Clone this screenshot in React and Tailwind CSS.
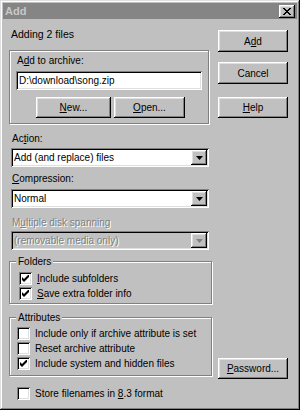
import React from 'react';

const raised = 'shadow-[inset_-1px_-1px_#000,inset_1px_1px_#fff,inset_-2px_-2px_#808080,inset_2px_2px_#dfdfdf]';
const sunken = 'shadow-[inset_1px_1px_#808080,inset_-1px_-1px_#fff,inset_2px_2px_#000,inset_-2px_-2px_#dfdfdf]';
const etched = 'border border-[#808080] shadow-[inset_1px_1px_#fff,1px_1px_#fff]';

const Btn = ({ children, className = '' }) => (
  <button className={`${raised} bg-[#c0c0c0] flex items-center justify-center text-[10px] leading-[13px] text-black ${className}`}>
    {children}
  </button>
);

const Select = ({ value, disabled, className = '' }) => (
  <div className={`${sunken} h-[19px] flex items-center pl-[3px] pr-[2px] ${disabled ? 'bg-[#c0c0c0]' : 'bg-white'} ${className}`}>
    <span className={`flex-1 whitespace-nowrap ${disabled ? 'text-[#808080] [text-shadow:1px_1px_#fff]' : ''}`}>{value}</span>
    <div className={`${raised} w-[16px] h-[15px] bg-[#c0c0c0] flex items-center justify-center`}>
      <svg width="7" height="4" viewBox="0 0 7 4">
        <polygon points="0,0 7,0 3.5,4" fill={disabled ? '#808080' : '#000'} />
      </svg>
    </div>
  </div>
);

const Check = ({ checked, children }) => (
  <div className="flex items-center h-[15px]">
    <div className={`${sunken} bg-white w-[13px] h-[13px] shrink-0 flex items-center justify-center`}>
      {checked && (
        <svg width="7" height="7" viewBox="0 0 7 7">
          <polygon points="0,2 2,4 7,-1 7,2 2,7 0,5" fill="#000" />
        </svg>
      )}
    </div>
    <span className="ml-[5px] whitespace-nowrap">{children}</span>
  </div>
);

const CloseGlyph = () => {
  // classic 8x7 pixel X
  const rows = ['##....##', '.##..##.', '..####..', '...##...', '..####..', '.##..##.', '##....##'];
  return (
    <svg width="8" height="7" viewBox="0 0 8 7" shapeRendering="crispEdges">
      {rows.map((r, y) =>
        r.split('').map((c, x) => (c === '#' ? <rect key={`${x}-${y}`} x={x} y={y} width="1" height="1" fill="#000" /> : null))
      )}
    </svg>
  );
};

export default function App() {
  return (
    <div className={`w-[300px] h-[410px] bg-[#c0c0c0] p-[3px] flex flex-col text-[10px] leading-[13px] text-black font-['Liberation_Sans',Arial,sans-serif] shadow-[inset_-1px_-1px_#000,inset_1px_1px_#dfdfdf,inset_-2px_-2px_#808080,inset_2px_2px_#fff]`}>
      {/* title bar */}
      <div className="h-[16px] bg-[#858585] flex items-center pl-[2px] pr-[2px]">
        <span className="font-bold text-[11px] text-[#c8c8c8] flex-1">Add</span>
        <button className={`${raised} bg-[#c0c0c0] w-[16px] h-[13px] flex items-center justify-center`}>
          <CloseGlyph />
        </button>
      </div>

      <div className="flex">
        {/* left column */}
        <div className="ml-[6px] w-[203px]">
          <div className="mt-[9px] ml-[2px] text-[10.5px]">Adding 2 files</div>

          <div className={`${etched} mt-[9px] w-[200px] pt-[3px] pb-[5px]`}>
            <div className="ml-[7px]">
              A<u>d</u>d to archive:
            </div>
            <div className={`${sunken} bg-white mt-[4px] ml-[6px] w-[186px] h-[19px] flex items-center pl-[3px]`}>
              D:\download\song.zip
            </div>
            <div className="flex mt-[7px] ml-[26px] gap-[3px]">
              <Btn className="w-[75px] h-[21px]">
                <u>N</u>ew...
              </Btn>
              <Btn className="w-[71px] h-[21px]">
                <u>O</u>pen...
              </Btn>
            </div>
          </div>

          <div className="ml-[2px]">
            <div className="mt-[8px] ml-[1px]">
              Ac<u>t</u>ion:
            </div>
            <Select className="mt-[3px] w-[198px]" value="Add (and replace) files" />
            <div className="mt-[5px] ml-[1px]">
              <u>C</u>ompression:
            </div>
            <Select className="mt-[4px] w-[198px]" value="Normal" />
            <div className="mt-[8px] ml-[1px] text-[#808080] [text-shadow:1px_1px_#fff]">
              M<u>u</u>ltiple disk spanning
            </div>
            <Select className="mt-[2px] w-[198px]" value="(removable media only)" disabled />
          </div>

          <fieldset className={`${etched} mt-[5px] w-[203px]`}>
            <legend className="ml-[6px] px-[2px] bg-[#c0c0c0]">Folders</legend>
            <div className="pl-[9px] pt-[3px] pb-[2px]">
              <Check checked>
                <u>I</u>nclude subfolders
              </Check>
              <Check checked>
                <u>S</u>ave extra folder info
              </Check>
            </div>
          </fieldset>

          <fieldset className={`${etched} mt-[7px] w-[203px]`}>
            <legend className="ml-[6px] px-[2px] bg-[#c0c0c0]">Attributes</legend>
            <div className="pl-[7px] pt-[2px] pb-[4px]">
              <Check>Include only if archive attribute is set</Check>
              <Check>Reset archive attribute</Check>
              <Check checked>Include system and hidden files</Check>
            </div>
          </fieldset>

          <div className="mt-[10px] ml-[8px]">
            <Check>
              Store filenames in <u>8</u>.3 format
            </Check>
          </div>
        </div>

        {/* right column */}
        <div className="ml-auto mr-[9px] w-[70px] flex flex-col pt-[11px] pb-[22px]">
          <Btn className="h-[22px]">
            A<u>d</u>d
          </Btn>
          <Btn className="h-[22px] mt-[10px]">Cancel</Btn>
          <Btn className="h-[21px] mt-[13px]">
            <u>H</u>elp
          </Btn>
          <Btn className="h-[21px] mt-auto">
            <u>P</u>assword...
          </Btn>
        </div>
      </div>
    </div>
  );
}
